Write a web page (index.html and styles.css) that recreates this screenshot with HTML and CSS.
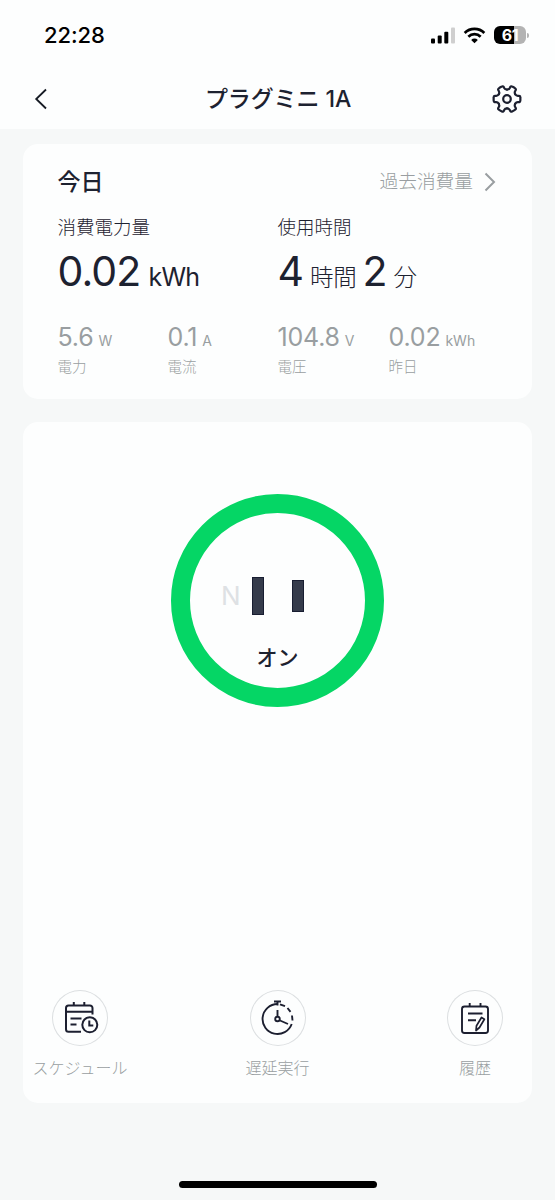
FILE: index.html
```html
<!DOCTYPE html>
<html lang="ja">
<head>
<meta charset="utf-8">
<title>プラグミニ 1A</title>
<link rel="stylesheet" href="styles.css">
</head>
<body>
<div class="screen">
  <header class="top">
    <div class="status">
      <span class="clock">22:28</span>
      <div class="indicators">
        <svg class="signal" width="25" height="17" viewBox="0 0 25 17">
          <rect x="0" y="11.5" width="4" height="5" rx="1"/><rect x="6.7" y="8.5" width="4" height="8" rx="1"/><rect x="13.3" y="4.8" width="4" height="11.7" rx="1"/><rect x="20" y="0.5" width="4" height="16" rx="1" fill="#cfcfcf"/>
        </svg>
        <svg class="wifi" width="23" height="17" viewBox="0 0 24 18">
          <g fill="none" stroke="#000" stroke-width="2.9"><path d="M1.6 6.3a14.8 14.8 0 0 1 20.8 0"/><path d="M5.5 10.3a9.3 9.3 0 0 1 13 0"/></g>
          <path d="M12 17.2l-3.500-3.500a5 5 0 0 1 7 0z"/>
        </svg>
        <div class="battery"><span class="level">61</span><i class="cap"></i></div>
      </div>
    </div>
    <nav class="bar">
      <svg class="back" width="14" height="22" viewBox="0 0 14 22"><path d="M12 1.5L2.2 11 12 20.5" fill="none" stroke="#161b24" stroke-width="1.8"/></svg>
      <h1 class="title">プラグミニ 1A</h1>
      <svg class="gear" width="30" height="30" viewBox="0 0 30 30" fill="none" stroke="#1c2030" stroke-width="2.2" stroke-linecap="round">
        <defs><path id="tooth" d="M23.200 10.270Q24.300 12 26 11.900Q28.200 11.500 28.300 13.200Q28.500 15 28.300 16.800Q28.200 18.500 26 18.100Q24.300 18 23.200 19.730"/></defs>
        <use href="#tooth"/><use href="#tooth" transform="rotate(60 15 15)"/><use href="#tooth" transform="rotate(120 15 15)"/><use href="#tooth" transform="rotate(180 15 15)"/><use href="#tooth" transform="rotate(240 15 15)"/><use href="#tooth" transform="rotate(300 15 15)"/>
        <circle cx="15" cy="15" r="3.8"/>
      </svg>
    </nav>
  </header>

  <main class="content">
    <section class="card usage">
      <div class="usage-head">
        <h2 class="today">今日</h2>
        <a class="past">過去消費量 <svg width="12" height="20" viewBox="0 0 12 20"><path d="M1.500 1.500L10 10 1.500 18.500" fill="none" stroke="#999ea1" stroke-width="2"/></svg></a>
      </div>
      <div class="totals">
        <div class="total">
          <div class="caption">消費電力量</div>
          <div class="big">0.02<span class="unit">kWh</span></div>
        </div>
        <div class="total">
          <div class="caption">使用時間</div>
          <div class="big">4<span class="unit jp">時間</span><span class="minutes">2</span><span class="unit jp">分</span></div>
        </div>
      </div>
      <div class="stats">
        <div class="stat"><div class="value">5.6<span class="small">W</span></div><div class="label">電力</div></div>
        <div class="stat"><div class="value">0.1<span class="small">A</span></div><div class="label">電流</div></div>
        <div class="stat"><div class="value">104.8<span class="small">V</span></div><div class="label">電圧</div></div>
        <div class="stat"><div class="value">0.02<span class="small">kWh</span></div><div class="label">昨日</div></div>
      </div>
    </section>

    <section class="card control">
      <div class="power">
        <div class="socket"><span class="neutral">N</span><i class="slot tall"></i><i class="slot"></i></div>
        <div class="state">オン</div>
      </div>
      <div class="actions">
        <div class="action">
          <div class="disc"><svg width="56" height="56" viewBox="0 0 56 56" fill="none" stroke="#1c1f30" stroke-width="2">
            <path d="M29 41.700H16.500a2.500 2.500 0 0 1-2.500-2.500V18a2.500 2.500 0 0 1 2.500-2.500h21.500a2.500 2.500 0 0 1 2.500 2.500V24.500M14 21.800h26.500M21.800 12V15.500M32.300 12V15.500M18.500 28.500h11M18.500 34.500h6"/><circle cx="37.800" cy="34.800" r="7.500"/><path d="M37.300 30.500v5h4"/>
          </svg></div>
          <div class="name">スケジュール</div>
        </div>
        <div class="action">
          <div class="disc"><svg width="56" height="56" viewBox="0 0 56 56" fill="none" stroke="#1c1f30" stroke-width="1.900">
            <path d="M27.500 14a15 15 0 1 0 14.200 20"/><path d="M24 11.500h7M27.500 11.500V15.500M30 14.300l5 1.900M37.500 18l3 3.800M42 25.500l.5 5M27.500 20v6.500M30 30.500l8 3.500"/><circle cx="27.500" cy="29" r="2.300"/>
          </svg></div>
          <div class="name">遅延実行</div>
        </div>
        <div class="action">
          <div class="disc"><svg width="56" height="56" viewBox="0 0 56 56" fill="none" stroke="#1c1f30" stroke-width="1.900" stroke-linejoin="round">
            <rect x="15" y="16.500" width="26" height="26.500" rx="2.500"/><path d="M22.700 13v3.500M33.500 13v3.500M21 23.500h14.500M21 30.300h8"/><path d="M29 40.500l.5-4.800 5-8.200 2.900 1.700-4.900 8.300z" fill="#fff" stroke-width="1.700"/>
          </svg></div>
          <div class="name">履歴</div>
        </div>
      </div>
    </section>
  </main>
  <div class="home"></div>
</div>
</body>
</html>
```
FILE: styles.css
```css
* { box-sizing: border-box; }
body { margin: 0; background: #f6f8f8; color: #1d2230; font-family: Inter, "Noto Sans CJK JP", sans-serif; }
h1, h2 { margin: 0; }
svg { display: block; }
.screen { width: 555px; height: 1200px; display: flex; flex-direction: column; background: #f6f8f8; overflow: hidden; }
.top { height: 129px; background: #fdfefe; }
.status { height: 68px; padding: 2px 26px 0 44px; display: flex; align-items: center; justify-content: space-between; }
.clock { color: #000; font-size: 22px; font-weight: 500; letter-spacing: -0.1px; }
.indicators { display: flex; align-items: center; }
.signal { margin-right: 7px; }
.wifi { margin-right: 8px; }
.battery { display: flex; align-items: center; gap: 1px; }
.level { width: 32px; height: 18px; border-radius: 6px; background: linear-gradient(90deg, #000 61%, #b3b3b3 61%); color: #fff; font-size: 16px; line-height: 18px; font-weight: 700; text-align: center; letter-spacing: -0.3px; }
.cap { width: 2px; height: 5px; border-radius: 0 2px 2px 0; background: #b3b3b3; }
.bar { height: 61px; padding: 0 33px 0 34px; display: grid; grid-template-columns: 30px 1fr 30px; align-items: center; }
.title { text-align: center; font-size: 23px; line-height: 32px; font-weight: 500; letter-spacing: -0.1px; }
.content { padding: 15px 23px 0; display: flex; flex-direction: column; gap: 23px; }
.card { background: #fdfefe; border-radius: 15px; }
.usage { height: 255px; padding: 20px 36px 0 34.500px; }
.usage-head { height: 36px; display: flex; justify-content: space-between; align-items: center; }
.today { font-size: 23px; line-height: 36px; font-weight: 500; }
.past { display: flex; align-items: center; gap: 11px; color: #999ea1; font-size: 18.700px; line-height: 38px; font-weight: 300; }
.totals { display: grid; grid-template-columns: 220px 1fr; }
.caption { margin-top: 12px; height: 30px; font-size: 18.500px; line-height: 30px; font-weight: 300; }
.big { height: 58px; line-height: 58px; font-size: 41px; font-weight: 400; letter-spacing: -0.9px; white-space: nowrap; }
.unit { margin-left: 8px; font-size: 25px; letter-spacing: -0.7px; }
.unit.jp { margin-left: 7px; font-size: 23.500px; font-weight: 300; letter-spacing: -0.3px; }
.minutes { margin-left: 6px; }
.stats { margin-top: 19px; display: grid; grid-template-columns: 110px 110px 111px 1fr; color: #999ea1; font-weight: 400; }
.value { height: 37px; line-height: 36px; font-size: 25px; letter-spacing: -0.2px; white-space: nowrap; }
.small { margin-left: 5px; font-size: 14px; letter-spacing: 0; }
.label { height: 22px; line-height: 22px; font-size: 14.500px; font-weight: 300; }
.control { height: 681px; padding-top: 72px; display: flex; flex-direction: column; align-items: center; justify-content: space-between; }
.power { width: 213px; height: 213px; border: 19px solid #05d665; border-radius: 50%; padding-top: 62px; }
.socket { height: 41px; padding-left: 31px; display: flex; align-items: center; }
.neutral { width: 31px; color: #dee1e4; font-size: 26px; line-height: 40px; padding-top: 1px; }
.slot { width: 12px; height: 32px; background: #353b4b; border: 1px solid #181d31; }
.slot.tall { height: 38px; margin-right: 28px; }
.state { margin-top: 26px; text-align: center; font-size: 21px; line-height: 32px; font-weight: 500; }
.actions { width: 100%; height: 113px; display: flex; justify-content: space-between; }
.action { width: 114px; display: flex; flex-direction: column; align-items: center; }
.disc { width: 56px; height: 56px; border-radius: 50%; box-shadow: inset 0 0 0 1px #dcdfe1; }
.name { margin-top: 10px; color: #999ea1; font-size: 16px; line-height: 24px; font-weight: 300; white-space: nowrap; }
.home { width: 198px; height: 7px; margin: 78px auto 0; border-radius: 4px; background: #000; }
```
